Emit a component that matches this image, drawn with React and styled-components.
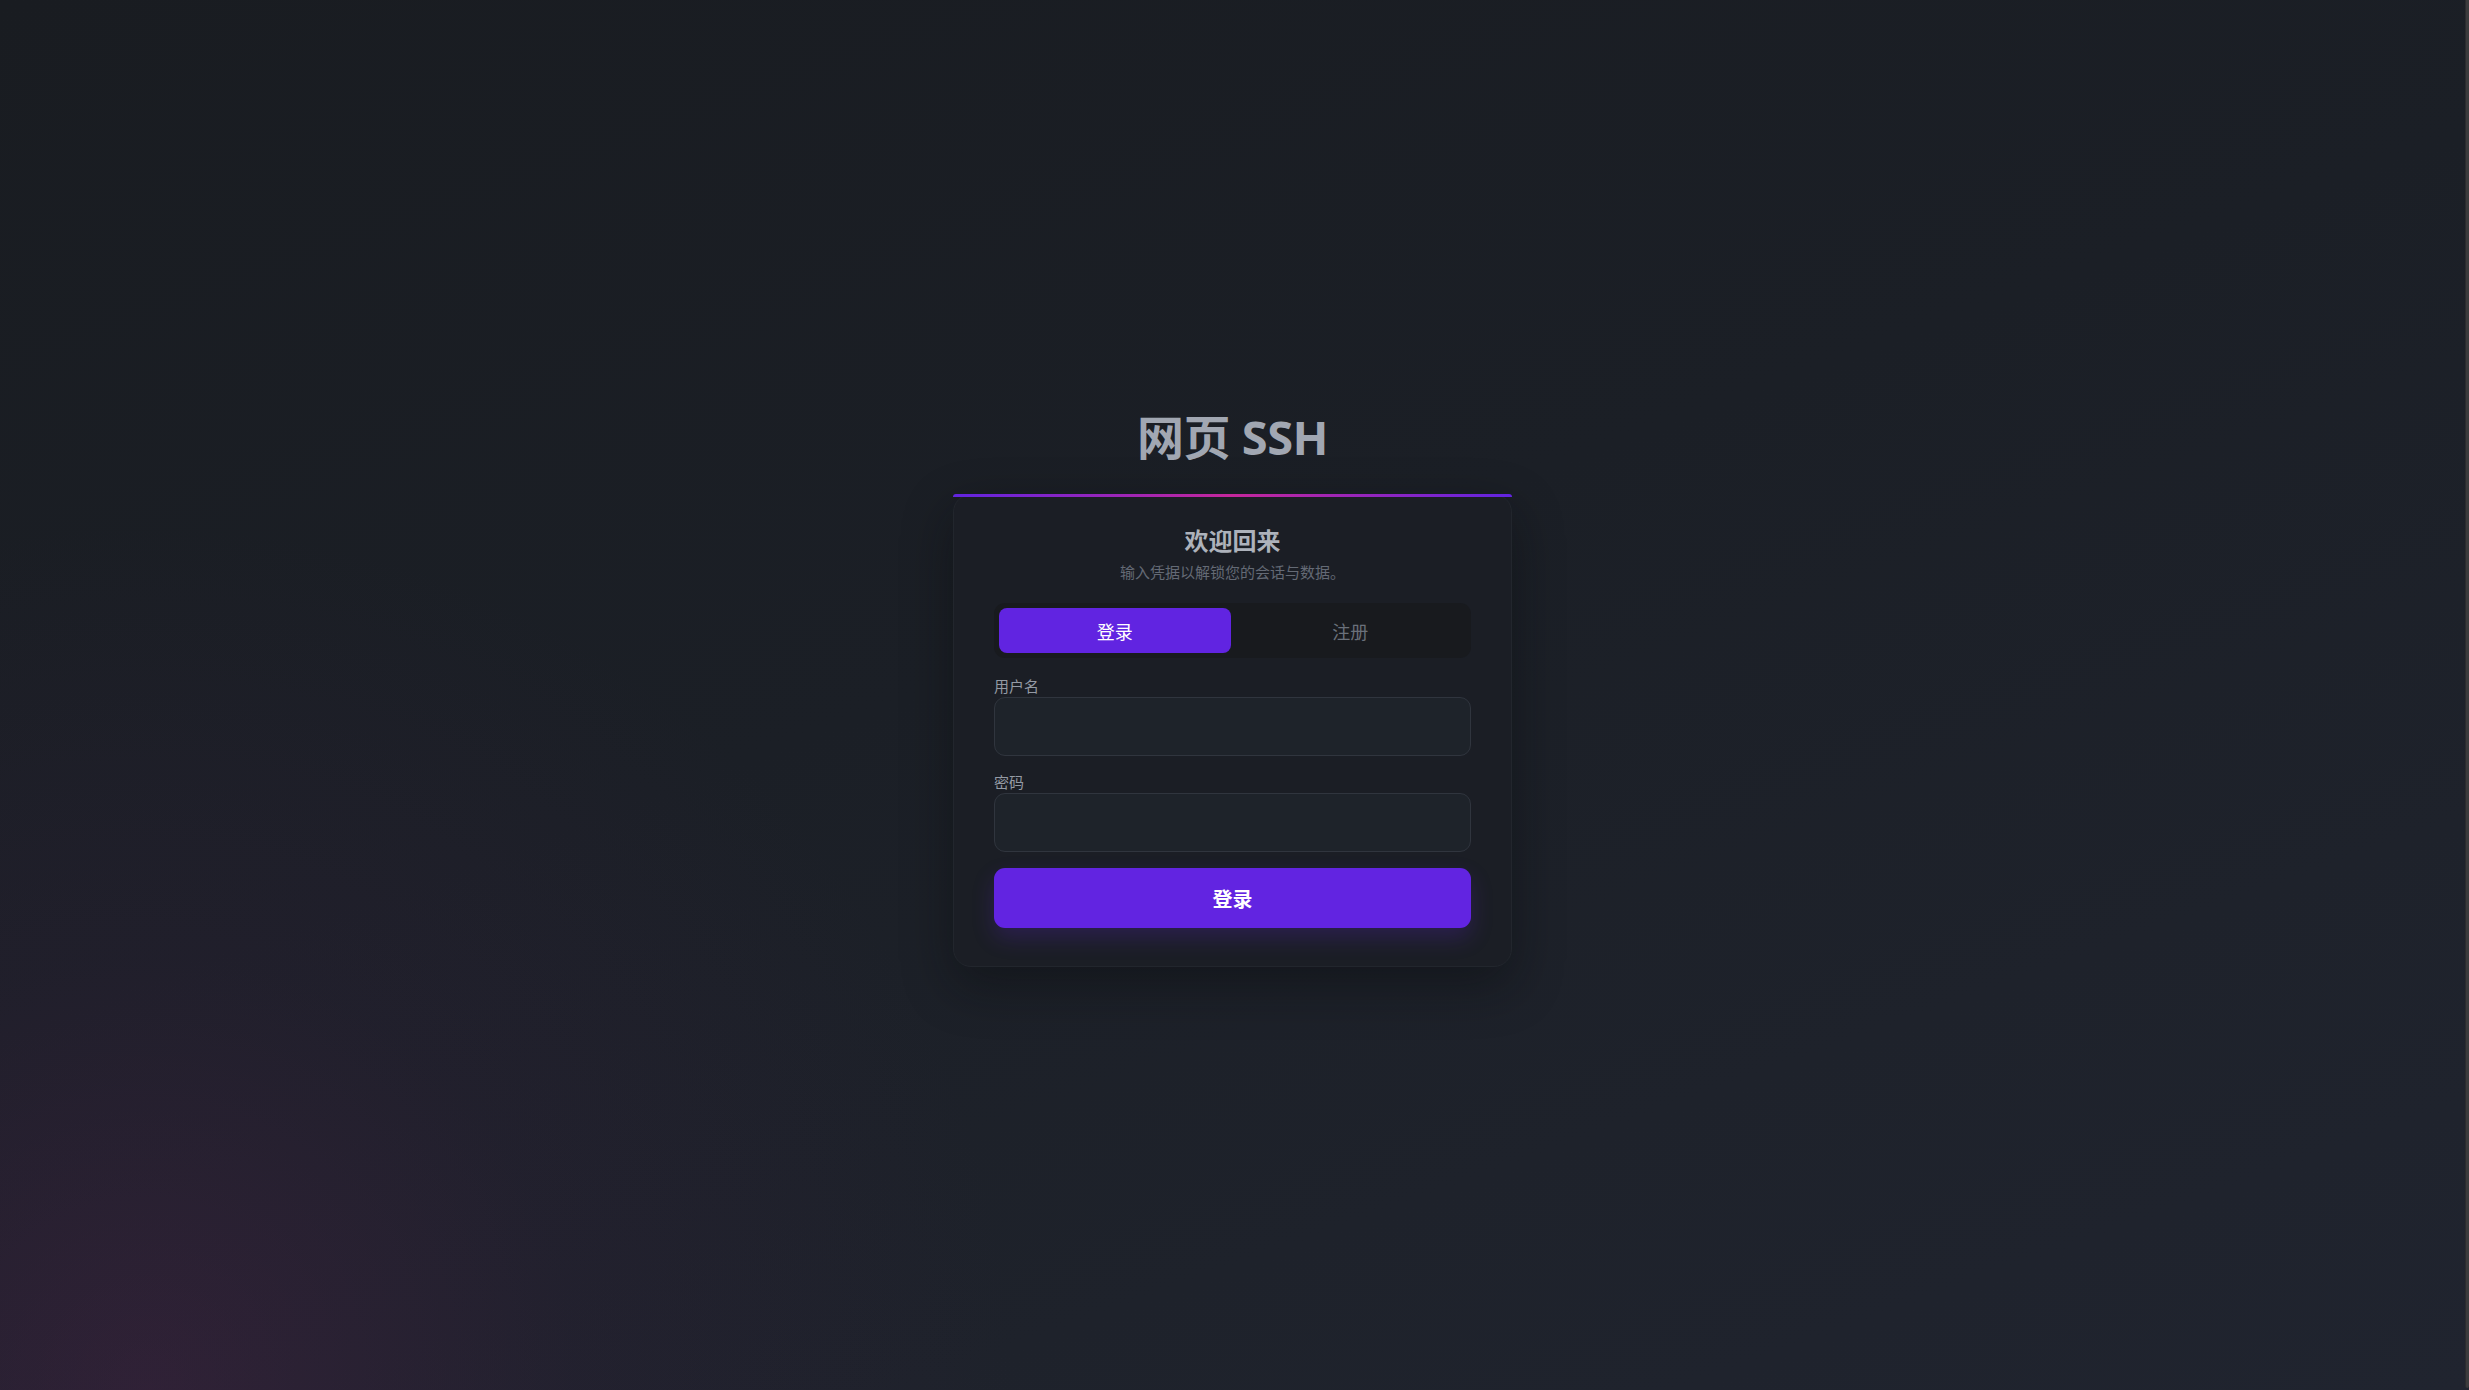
import React, { useState } from 'react';
import styled, { createGlobalStyle } from 'styled-components';

const GlobalStyle = createGlobalStyle`
  html, body {
    margin: 0;
    padding: 0;
    background: #1b1f26;
  }

  * {
    box-sizing: border-box;
  }

  body {
    font-family: "Noto Sans", "Noto Sans CJK SC", sans-serif;
  }
`;

const Page = styled.main`
  min-height: 100vh;
  display: flex;
  flex-direction: column;
  align-items: center;
  justify-content: center;
  padding: 0 4px 15px 0;
  background:
    radial-gradient(circle at 6% 100%, rgba(84, 34, 80, 0.34) 0%, rgba(60, 30, 70, 0.16) 16%, transparent 32%),
    linear-gradient(160deg, #191c21 0%, #1b1f26 45%, #1e222b 75%, #20242f 100%);
`;

// thin scrollbar thumb along the right edge of the window
const ScrollThumb = styled.div`
  position: fixed;
  top: 0;
  right: 0;
  bottom: 2px;
  width: 4px;
  background: #3b3b3d;
  border-left: 1px solid #2c2c2e;
  border-radius: 0 0 3px 3px;
`;

const AppTitle = styled.h1`
  margin: 0 0 28px;
  font-size: 47px;
  line-height: 58px;
  font-weight: 700;
  color: #a1a7b2;
  letter-spacing: -0.5px;
`;

const Card = styled.section`
  position: relative;
  width: 559px;
  padding: 30px 40px 38px;
  background: #1b1e25;
  border: 1px solid #22262d;
  border-radius: 18px;
  box-shadow: 0 18px 50px rgba(8, 10, 14, 0.45);
`;

const TopBar = styled.div`
  position: absolute;
  top: -1px;
  left: -1px;
  right: -1px;
  height: 3px;
  border-radius: 3px 3px 0 0;
  background: linear-gradient(90deg, #6124e1 0%, #c5279b 50%, #6124e1 100%);
`;

const Heading = styled.h2`
  margin: 0;
  text-align: center;
  font-size: 24px;
  line-height: 32px;
  font-weight: 700;
  color: #adb2bb;
`;

const Subtitle = styled.p`
  margin: 5px 0 21px;
  text-align: center;
  font-size: 15px;
  line-height: 20px;
  color: #646a75;
`;

const Tabs = styled.div`
  display: grid;
  grid-template-columns: 1fr 1fr;
  gap: 4px;
  padding: 5px;
  background: #181a1e;
  border-radius: 11px;
`;

const Tab = styled.button`
  height: 45px;
  border: none;
  border-radius: 8px;
  font-family: inherit;
  font-size: 18px;
  cursor: pointer;
  background: ${p => (p.$active ? '#6124e1' : 'transparent')};
  color: ${p => (p.$active ? '#ffffff' : '#6a707a')};
`;

const Form = styled.form`
  display: flex;
  flex-direction: column;
  gap: 17px;
  margin-top: 19px;
`;

const Field = styled.div`
  display: flex;
  flex-direction: column;
  gap: 2px;
`;

const Label = styled.label`
  font-size: 15px;
  line-height: 18px;
  color: #949aa4;
`;

const Input = styled.input`
  height: 59px;
  padding: 0 16px;
  background: #1e232a;
  border: 1px solid #30353e;
  border-radius: 11px;
  color: #d1d5db;
  font-family: inherit;
  font-size: 16px;

  &:focus {
    outline: none;
    border-color: #6124e1;
  }
`;

const SubmitButton = styled.button`
  height: 60px;
  margin-top: -1px;
  border: none;
  border-radius: 11px;
  background: #6224e1;
  color: #ffffff;
  font-family: inherit;
  font-size: 20px;
  font-weight: 700;
  cursor: pointer;
  box-shadow: 0 10px 22px rgba(98, 36, 225, 0.22);
`;

const App = () => {
  const [mode, setMode] = useState('login');
  const [form, setForm] = useState({ username: '', password: '' });

  const handleChange = (e) => {
    const { name, value } = e.target;
    setForm(prev => ({ ...prev, [name]: value }));
  };

  return (
    <>
      <GlobalStyle />
      <Page>
        <AppTitle>网页 SSH</AppTitle>
        <Card>
          <TopBar />
          <Heading>欢迎回来</Heading>
          <Subtitle>输入凭据以解锁您的会话与数据。</Subtitle>

          <Tabs>
            <Tab type="button" $active={mode === 'login'} onClick={() => setMode('login')}>
              登录
            </Tab>
            <Tab type="button" $active={mode === 'register'} onClick={() => setMode('register')}>
              注册
            </Tab>
          </Tabs>

          <Form onSubmit={e => e.preventDefault()}>
            <Field>
              <Label htmlFor="username">用户名</Label>
              <Input id="username" name="username" value={form.username} onChange={handleChange} />
            </Field>
            <Field>
              <Label htmlFor="password">密码</Label>
              <Input id="password" name="password" type="password" value={form.password} onChange={handleChange} />
            </Field>
            <SubmitButton type="submit">{mode === 'login' ? '登录' : '注册'}</SubmitButton>
          </Form>
        </Card>
      </Page>
      <ScrollThumb />
    </>
  );
};

export default App;
